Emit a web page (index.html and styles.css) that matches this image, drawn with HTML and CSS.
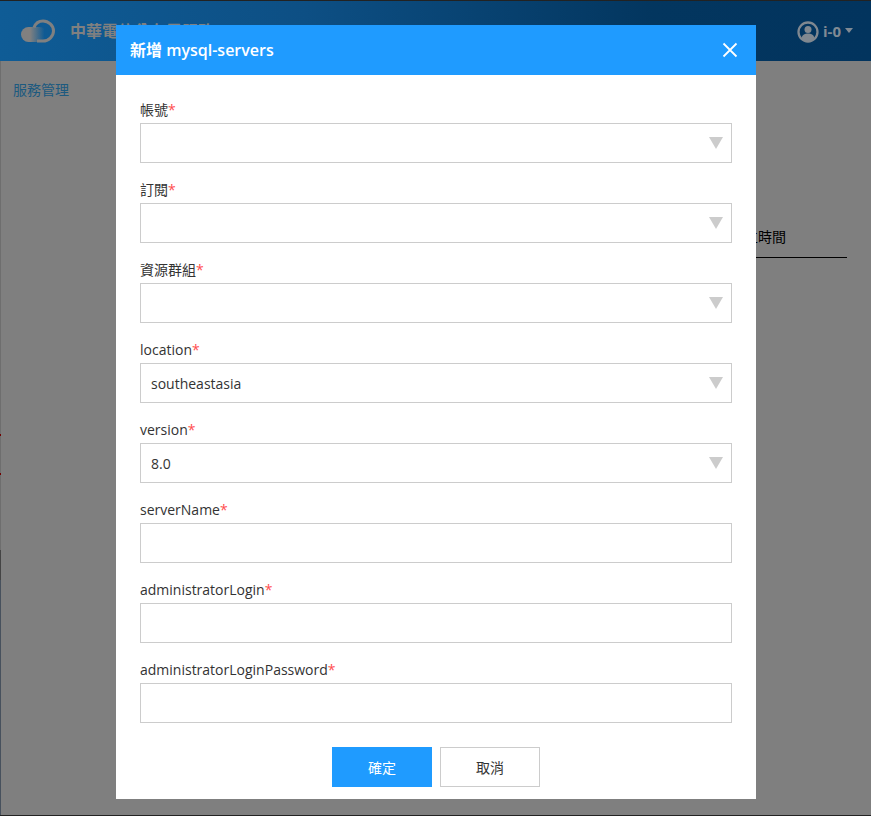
FILE: index.html
```html
<!DOCTYPE html>
<html lang="en">
<head>
  <meta charset="UTF-8">
  <title>新增 mysql-servers</title>
  <meta name="viewport" content="width=device-width, initial-scale=1.0" />
  <link rel="stylesheet" href="styles.css">
</head>
<body>
  <div class="page">
    <div class="edge"></div>
    <header class="topbar">
      <div class="brand">
        <svg class="logo" width="36" height="24" viewBox="0 0 36 24">
          <defs>
            <linearGradient id="cloudFade" x1="0" x2="1" y1="0" y2="0">
              <stop offset="0.35" stop-color="#808080"/>
              <stop offset="0.9" stop-color="#808080" stop-opacity="0"/>
            </linearGradient>
          </defs>
          <rect x="1" y="8" width="26" height="15" rx="7.500" fill="url(#cloudFade)"/>
          <path d="M14 8.500C15.500 4.500 18.500 2 23 2c5.500 0 10.500 4.500 10.500 10S28.500 22 23 22h-6" fill="none" stroke="#808080" stroke-width="3"/>
        </svg>
        <span class="brand-name">中華電信公有雲服務</span>
      </div>
      <div class="user">
        <svg width="22" height="22" viewBox="0 0 22 22">
          <circle cx="11" cy="11" r="9.500" fill="none" stroke="#808890" stroke-width="2.300"/>
          <circle cx="11" cy="8.500" r="3.500" fill="#808890"/>
          <path d="M4.500 17c1-3.500 3.500-4.500 6.500-4.500s5.500 1 6.500 4.500c-1.500 2-4 3.500-6.500 3.500s-5-1.500-6.500-3.500z" fill="#808890"/>
        </svg>
        <span class="user-name">i-0</span>
        <span class="caret"></span>
      </div>
    </header>
    <nav class="sidebar">
      <a class="side-link">服務管理</a>
    </nav>
    <div class="table-head">建立時間</div>
  </div>

  <div class="overlay"></div>

  <div class="modal">
    <div class="modal-head">
      <h3>新增 mysql-servers</h3>
      <svg class="close" width="16" height="16" viewBox="0 0 16 16">
        <path d="M1.500 1.500l13 13M14.500 1.500l-13 13" stroke="#fff" stroke-width="1.800" fill="none"/>
      </svg>
    </div>
    <div class="modal-body">
      <div class="field">
        <label>帳號<span class="req">*</span></label>
        <div class="input select"></div>
      </div>
      <div class="field">
        <label>訂閱<span class="req">*</span></label>
        <div class="input select"></div>
      </div>
      <div class="field">
        <label>資源群組<span class="req">*</span></label>
        <div class="input select"></div>
      </div>
      <div class="field">
        <label>location<span class="req">*</span></label>
        <div class="input select">southeastasia</div>
      </div>
      <div class="field">
        <label>version<span class="req">*</span></label>
        <div class="input select">8.0</div>
      </div>
      <div class="field">
        <label>serverName<span class="req">*</span></label>
        <div class="input"></div>
      </div>
      <div class="field">
        <label>administratorLogin<span class="req">*</span></label>
        <div class="input"></div>
      </div>
      <div class="field">
        <label>administratorLoginPassword<span class="req">*</span></label>
        <div class="input"></div>
      </div>
    </div>
    <div class="modal-foot">
      <button class="btn primary">確定</button>
      <button class="btn">取消</button>
    </div>
  </div>
</body>
</html>
```
FILE: styles.css
```css
html, body {
  height: 100%;
}

body {
  margin: 0;
  overflow: hidden;
  background: #fff;
  color: #333;
  font-family: 'Open Sans', 'Noto Sans CJK TC', sans-serif;
  font-size: 14px;
}

.page {
  height: 816px;
  box-sizing: border-box;
  border-top: 1px solid #444;
  border-bottom: 1px solid #444;
  position: relative;
}

/* sliver of the layer behind, 1px wide */
.edge {
  position: absolute;
  top: 0;
  left: 0;
  width: 1px;
  height: 100%;
  background: linear-gradient(180deg,
    #ddd 433px, #e00000 433px, #e00000 435px,
    #ddd 435px, #ddd 472px, #e00000 472px, #e00000 474px,
    #ddd 474px, #ddd 549px, #888 549px, #888 579px, #8fa3bb 579px);
}

.topbar {
  position: relative;
  z-index: 1;
  height: 60px;
  display: flex;
  justify-content: space-between;
  align-items: center;
  padding: 0 18px 0 20px;
  background: linear-gradient(90deg, #0f5c96 0%, #0d4f84 35%, #03365f 75%, #02345e 100%);
}

.brand {
  display: flex;
  align-items: center;
  gap: 14px;
}

.brand-name {
  color: #808080;
  font-size: 16px;
  font-weight: bold;
  margin-bottom: 2px;
}

.user {
  display: flex;
  align-items: center;
  gap: 4px;
  color: #808a94;
  font-size: 15px;
  font-weight: bold;
  margin-top: 2px;
}

.user-name {
  margin-bottom: 2px;
}

.caret {
  width: 0;
  height: 0;
  margin-bottom: 3px;
  border-left: 4px solid transparent;
  border-right: 4px solid transparent;
  border-top: 5px solid #808a94;
}

.sidebar {
  padding: 18px 13px;
}

.side-link {
  color: #3ab4ff;
}

.table-head {
  position: absolute;
  top: 228px;
  left: 730px;
  width: 117px;
  height: 29px;
  box-sizing: border-box;
  border-bottom: 1px solid #000;
  color: #000;
  line-height: 16px;
}

/* Overlay styles */
.overlay {
  position: fixed;
  top: 0; left: 0;
  width: 100%; height: 100%;
  background: rgba(0, 0, 0, 0.5);
}

.modal {
  position: fixed;
  z-index: 2;
  top: 25px;
  left: 116px;
  width: 640px;
  background: #fff;
}

.modal-head {
  height: 50px;
  box-sizing: border-box;
  display: flex;
  justify-content: space-between;
  align-items: center;
  padding: 0 18px 0 14px;
  background: #1f9bff;
  color: #fff;
}

.modal-head h3 {
  margin: 0 0 2px;
  font-size: 16px;
  font-weight: 600;
}

.modal-body {
  padding: 25px 24px 0;
  display: flex;
  flex-direction: column;
  gap: 17px;
}

.field label {
  display: block;
  height: 20px;
  margin-bottom: 3px;
  line-height: 20px;
}

.req {
  color: #ff4d4f;
}

.input {
  height: 40px;
  box-sizing: border-box;
  border: 1px solid #ccc;
  padding: 0 10px;
  line-height: 40px;
  position: relative;
}

.select::after {
  content: "";
  position: absolute;
  top: 13px;
  right: 8px;
  border-left: 7px solid transparent;
  border-right: 7px solid transparent;
  border-top: 12px solid #ccc;
}

.modal-foot {
  display: flex;
  justify-content: center;
  gap: 8px;
  padding: 24px 0 12px;
}

.btn {
  width: 100px;
  height: 40px;
  border: 1px solid #ccc;
  background: #fff;
  color: #333;
  font-family: inherit;
  font-size: 14px;
}

.btn.primary {
  border: none;
  background: #1f9bff;
  color: #fff;
}
```
